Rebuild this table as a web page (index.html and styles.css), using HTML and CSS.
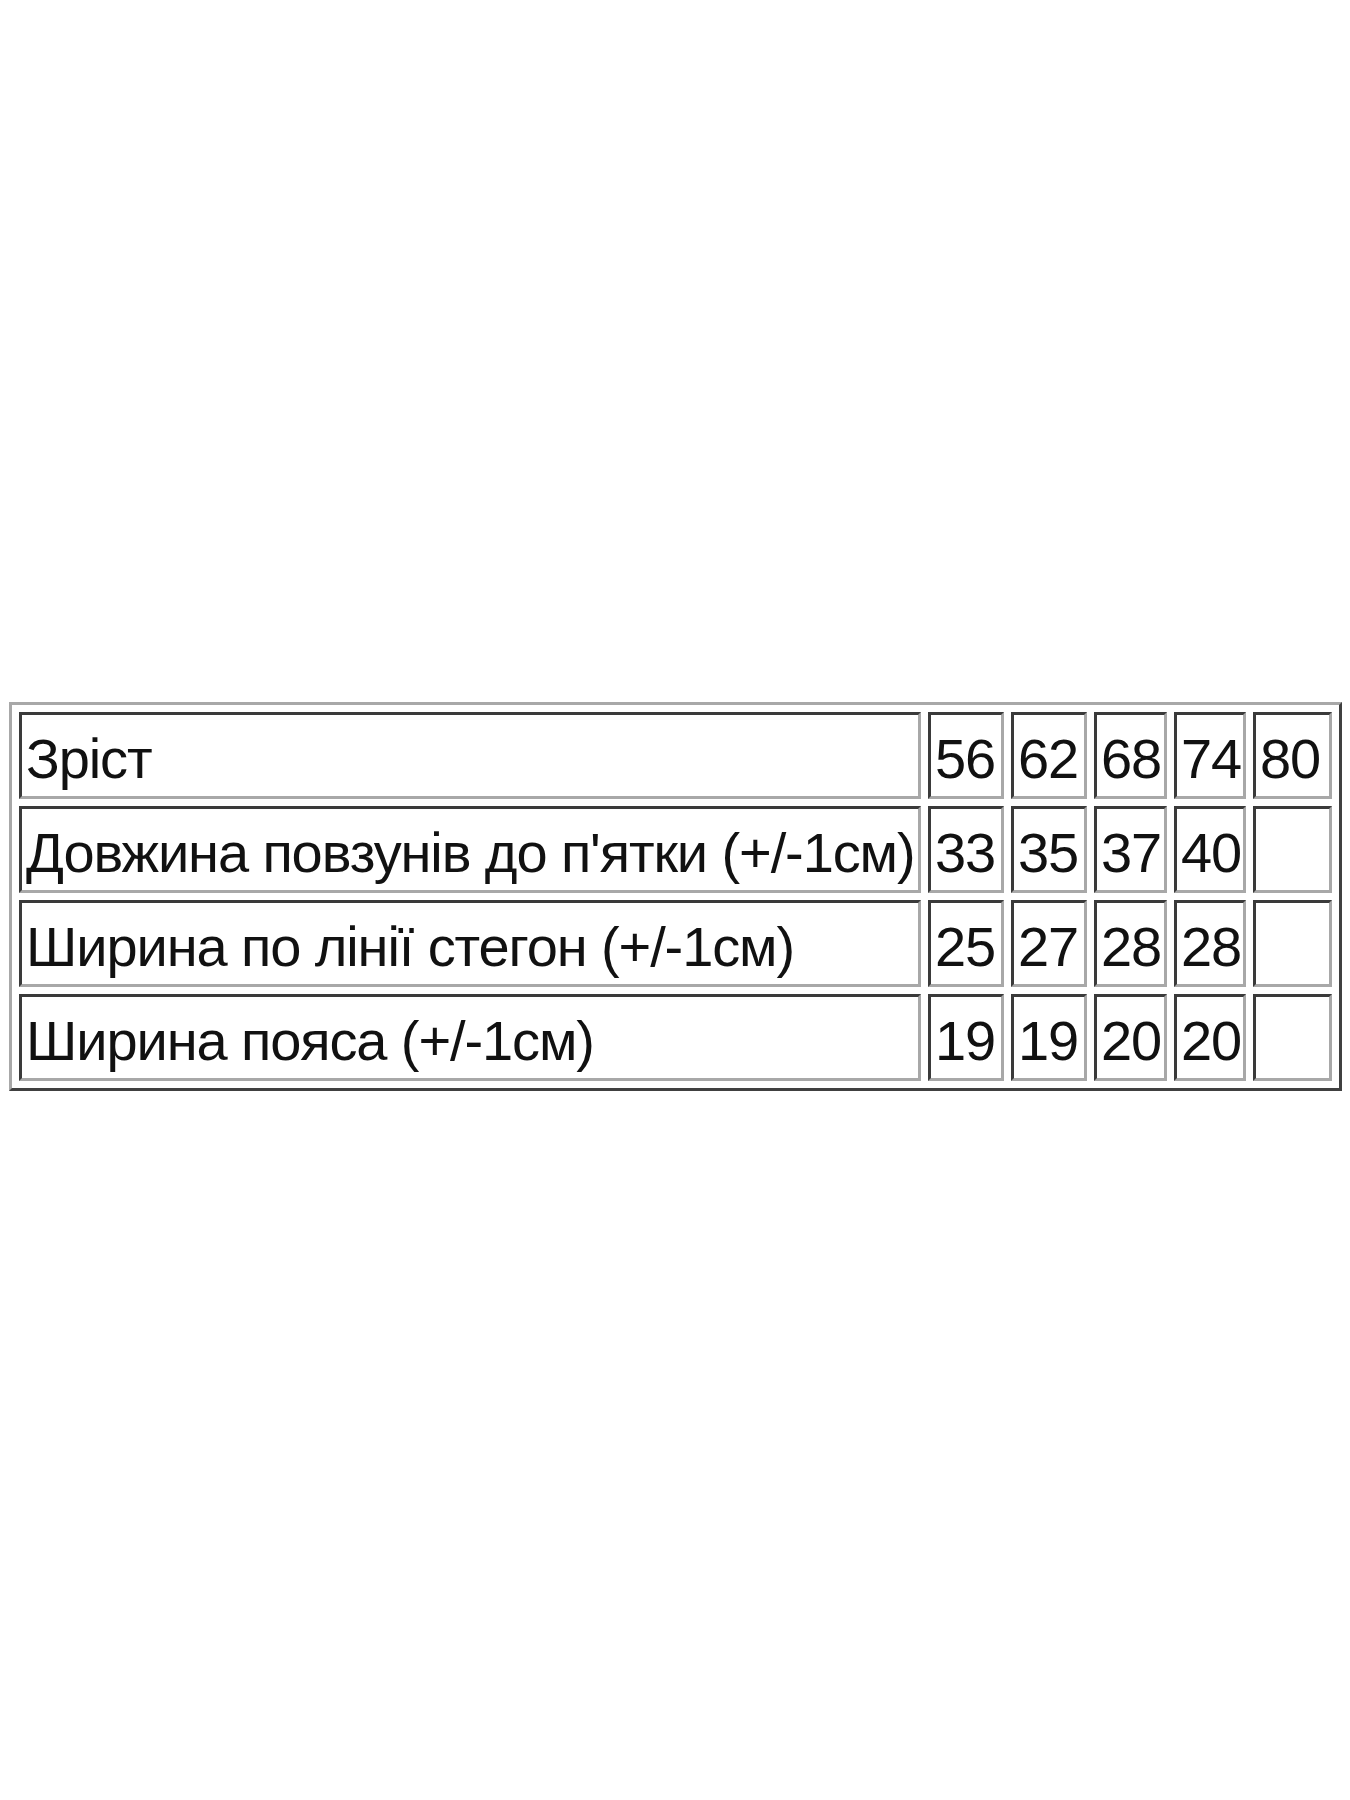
FILE: index.html
```html
<!DOCTYPE html>
<html lang="uk">
<head>
<meta charset="utf-8">
<title>Розмірна сітка</title>
<link rel="stylesheet" href="styles.css">
</head>
<body>
<main class="page">
  <table class="sizes">
    <tbody>
      <tr>
        <td class="label">Зріст</td>
        <td class="c1">56</td>
        <td class="c2">62</td>
        <td class="c3">68</td>
        <td class="c4">74</td>
        <td class="c5">80</td>
      </tr>
      <tr>
        <td class="label">Довжина повзунів до п'ятки (+/-1см)</td>
        <td class="c1">33</td>
        <td class="c2">35</td>
        <td class="c3">37</td>
        <td class="c4">40</td>
        <td class="c5"></td>
      </tr>
      <tr>
        <td class="label">Ширина по лінії стегон (+/-1см)</td>
        <td class="c1">25</td>
        <td class="c2">27</td>
        <td class="c3">28</td>
        <td class="c4">28</td>
        <td class="c5"></td>
      </tr>
      <tr>
        <td class="label">Ширина пояса (+/-1см)</td>
        <td class="c1">19</td>
        <td class="c2">19</td>
        <td class="c3">20</td>
        <td class="c4">20</td>
        <td class="c5"></td>
      </tr>
    </tbody>
  </table>
</main>
</body>
</html>
```

FILE: styles.css
```css
html, body {
  margin: 0;
  padding: 0;
  background: #ffffff;
}

.page {
  box-sizing: border-box;
  width: 1350px;
  height: 1800px;
  padding: 702px 0 0 9px;
}

.sizes {
  table-layout: fixed;
  width: 1333px;
  border-collapse: separate;
  border-spacing: 7px;
  border-style: solid;
  border-width: 3px;
  border-color: #a8a8a8 #404040 #404040 #a8a8a8;
  font-family: "Liberation Sans", Arial, sans-serif;
  font-size: 56px;
  line-height: 63px;
  letter-spacing: -1.1px;
  color: #111111;
}

.sizes td {
  box-sizing: border-box;
  height: 87px;
  padding: 12px 2px 6px 4px;
  border-style: solid;
  border-width: 3px;
  border-color: #3a3a3a #a8a8a8 #a8a8a8 #3a3a3a;
  white-space: nowrap;
  overflow: hidden;
  vertical-align: middle;
  text-align: left;
}

.sizes .label { width: 902px; }
.sizes .c1 { width: 76px; }
.sizes .c2 { width: 76px; }
.sizes .c3 { width: 73px; }
.sizes .c4 { width: 72px; }
.sizes .c5 { width: 79px; }
```
